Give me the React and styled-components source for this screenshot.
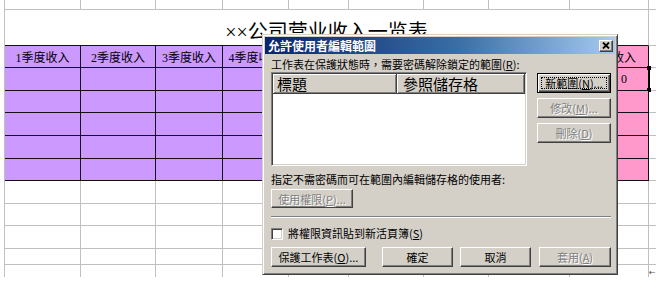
import React from 'react';
import styled, { createGlobalStyle, css } from 'styled-components';

const Global = createGlobalStyle`
  html, body { margin: 0; padding: 0; background: #fff; }
  body { width: 656px; height: 286px; overflow: hidden; }
  #root { width: 656px; height: 286px; }
`;

const COLS = '5px 76px 75px 67px 66px 60px 75px 65px 81px 79px 1fr';
const GRID = '#c0c0c0';
const INK = '#141018';
const PURPLE = '#cc99ff';
const PINK = '#ff99cc';
const FACE = '#d4d0c8';

const Page = styled.div`
  position: relative;
  width: 656px;
  height: 286px;
  background: #fff;
  overflow: hidden;
`;

const Sheet = styled.div`
  display: flex;
  flex-direction: column;
`;

const Row = styled.div`
  display: grid;
  grid-template-columns: ${COLS};
  height: ${(p) => p.$h}px;
`;

const Gutter = styled.div`
  box-sizing: border-box;
  border-right: 1px solid ${GRID};
`;

const Rest = styled.div`
  box-sizing: border-box;
  border-bottom: ${(p) => (p.$noBottom ? 'none' : `1px solid ${GRID}`)};
  display: flex;
  align-items: flex-end;
  font-family: "DejaVu Sans", sans-serif;
  font-size: 8px;
  line-height: 8px;
  color: #505050;
  overflow: hidden;
`;

const Cell = styled.div`
  box-sizing: border-box;
  position: relative;
  grid-column: span ${(p) => p.$span || 1};
  display: flex;
  align-items: center;
  justify-content: ${(p) => p.$justify || 'center'};
  padding-left: ${(p) => p.$indent || 0}px;
  padding-top: ${(p) => p.$padTop || 0}px;
  background: ${(p) => p.$bg || 'transparent'};
  border-right: 1px solid ${(p) => p.$line || GRID};
  border-bottom: ${(p) => (p.$noBottom ? 'none' : `1px solid ${p.$bottom || p.$line || GRID}`)};
  font-family: "Liberation Serif", "Noto Sans CJK SC", serif;
  font-size: ${(p) => p.$size || 12}px;
  color: #000;
  white-space: nowrap;
  overflow: visible;
`;

const Selection = styled.div`
  position: absolute;
  right: -2px;
  top: -2px;
  bottom: -2px;
  width: 2px;
  background: #000;
  &::before, &::after {
    content: '';
    position: absolute;
    left: -1px;
    width: 4px;
    height: 4px;
    background: #000;
  }
  &::before { top: 0; }
  &::after { bottom: 0; }
`;

/* ---------- dialog ---------- */

const Dialog = styled.div`
  position: absolute;
  left: 262px;
  top: 34px;
  width: 356px;
  height: 241px;
  box-sizing: border-box;
  background: ${FACE};
  border: 1px solid;
  border-color: ${FACE} #404040 #404040 ${FACE};
  box-shadow: inset 1px 1px 0 #fff, inset -1px -1px 0 #808080;
  padding: 2px;
  display: flex;
  flex-direction: column;
  font-family: "Noto Sans CJK TC", "Noto Sans CJK SC", sans-serif;
  font-size: 11px;
  color: #000;
`;

const TitleBar = styled.div`
  height: 17px;
  flex: none;
  display: flex;
  align-items: center;
  justify-content: space-between;
  padding: 0 2px 0 3px;
  background: linear-gradient(to right, #0a246a, #3a6ea5 55%, #a6caf0);
  color: #fff;
  font-weight: bold;
  font-size: 12px;
  line-height: 17px;
`;

const CloseBtn = styled.div`
  box-sizing: border-box;
  width: 14px;
  height: 12px;
  background: ${FACE};
  border: 1px solid;
  border-color: #fff #404040 #404040 #fff;
  box-shadow: inset -1px -1px 0 #808080;
  display: flex;
  align-items: center;
  justify-content: center;
`;

const Body = styled.div`
  display: flex;
  flex-direction: column;
  padding: 0 4px 0 6px;
`;

const Label = styled.div`
  margin-top: ${(p) => p.$mt}px;
  height: 12px;
  line-height: 12px;
  white-space: nowrap;
`;

const U = styled.span`
  text-decoration: underline;
`;

const MainRow = styled.div`
  margin-top: 2px;
  display: flex;
  gap: 10px;
`;

const ListBox = styled.div`
  box-sizing: border-box;
  flex: 1;
  height: 94px;
  background: #fff;
  border: 1px solid;
  border-color: #808080 #fff #fff #808080;
  box-shadow: inset 1px 1px 0 #404040, inset -1px -1px 0 ${FACE};
  padding: 1px;
`;

const ListHead = styled.div`
  display: flex;
  height: 20px;
`;

const HeadCell = styled.div`
  box-sizing: border-box;
  width: ${(p) => (p.$w ? `${p.$w}px` : 'auto')};
  flex: ${(p) => (p.$w ? 'none' : 1)};
  height: 20px;
  background: ${FACE};
  border-right: 1px solid #404040;
  border-bottom: 1px solid #404040;
  box-shadow: inset 1px 1px 0 #fff, inset -1px -1px 0 #808080;
  padding-left: ${(p) => p.$pl}px;
  font-size: 15px;
  line-height: 20px;
  color: #000;
  white-space: nowrap;
  overflow: hidden;
`;

const SideButtons = styled.div`
  margin-top: 1px;
  display: flex;
  flex-direction: column;
  gap: 5px;
  width: 74px;
`;

const Btn = styled.div`
  box-sizing: border-box;
  flex: none;
  width: ${(p) => p.$w}px;
  height: ${(p) => p.$h || 20}px;
  margin-left: ${(p) => p.$ml || 0}px;
  margin-top: ${(p) => p.$mt || 0}px;
  background: ${FACE};
  border: 1px solid;
  border-color: #fff #404040 #404040 #fff;
  box-shadow: inset -1px -1px 0 #808080;
  display: flex;
  align-items: center;
  justify-content: center;
  font-size: 11px;
  line-height: 12px;
  white-space: nowrap;
  color: ${(p) => (p.$disabled ? '#808080' : '#000')};
  text-shadow: ${(p) => (p.$disabled ? '1px 1px 0 #fff' : 'none')};
  ${(p) =>
    p.$default &&
    css`
      border-color: #000;
      box-shadow: inset 1px 1px 0 #fff, inset -1px -1px 0 #404040, inset -2px -2px 0 #808080;
      outline: 1px dotted #000;
      outline-offset: -5px;
    `}
`;

const Separator = styled.div`
  margin-top: 8px;
  height: 0;
  border-top: 1px solid #808080;
  border-bottom: 1px solid #fff;
`;

const CheckRow = styled.div`
  margin-top: 9px;
  display: flex;
  align-items: center;
  gap: 5px;
  height: 13px;
  line-height: 13px;
  white-space: nowrap;
`;

const CheckBox = styled.div`
  box-sizing: border-box;
  width: 12px;
  height: 12px;
  background: #fff;
  border: 1px solid;
  border-color: #808080 #fff #fff #808080;
  box-shadow: inset 1px 1px 0 #404040, inset -1px -1px 0 ${FACE};
`;

const BottomRow = styled.div`
  margin-top: 7px;
  display: flex;
`;

const headers = ['1季度收入', '2季度收入', '3季度收入', '4季度收入', '', '', '', ''];
const dataHeights = [23, 22, 23, 23, 22];
const whiteHeights = [23, 22, 23, 16, 12];

export default function App() {
  return (
    <Page>
      <Global />
      <Sheet>
        <Row $h={10}>
          <Gutter />
          {Array.from({ length: 9 }).map((_, i) => (
            <Cell key={i} />
          ))}
          <Rest />
        </Row>
        <Row $h={36}>
          <Gutter />
          <Cell $span={9} $bottom={INK} $padTop={5} $size={20}>
            ××公司营业收入一览表
          </Cell>
          <Rest />
        </Row>
        <Row $h={22}>
          <Gutter />
          {headers.map((t, i) => (
            <Cell key={i} $bg={PURPLE} $line={INK}>
              {t}
            </Cell>
          ))}
          <Cell $bg={PINK} $line={INK} $indent={6}>
            全年收入
          </Cell>
          <Rest />
        </Row>
        {dataHeights.map((h, r) => (
          <Row key={r} $h={h}>
            <Gutter />
            {headers.map((_, i) => (
              <Cell key={i} $bg={PURPLE} $line={INK} />
            ))}
            {r === 0 ? (
              <Cell $bg={PINK} $line={INK} $justify="flex-start" $indent={51}>
                0
                <Selection />
              </Cell>
            ) : (
              <Cell $bg={PINK} $line={INK} />
            )}
            <Rest />
          </Row>
        ))}
        {whiteHeights.map((h, r) => {
          const last = r === whiteHeights.length - 1;
          return (
            <Row key={r} $h={h}>
              <Gutter />
              {Array.from({ length: 9 }).map((_, i) => (
                <Cell key={i} $noBottom={last} />
              ))}
              <Rest $noBottom={last}>{last ? '←' : ''}</Rest>
            </Row>
          );
        })}
      </Sheet>

      <Dialog>
        <TitleBar>
          <span>允許使用者編輯範圍</span>
          <CloseBtn>
            <svg width="8" height="7" viewBox="0 0 8 7">
              <path d="M1 0.5 L7 6.5 M7 0.5 L1 6.5" stroke="#000" strokeWidth="1.8" />
            </svg>
          </CloseBtn>
        </TitleBar>
        <Body>
          <Label $mt={4}>
            工作表在保護狀態時，需要密碼解除鎖定的範圍(<U>R</U>):
          </Label>
          <MainRow>
            <ListBox>
              <ListHead>
                <HeadCell $w={124} $pl={4}>標題</HeadCell>
                <HeadCell $pl={6}>參照儲存格</HeadCell>
              </ListHead>
            </ListBox>
            <SideButtons>
              <Btn $w={74} $default>
                新範圍(<U>N</U>)...
              </Btn>
              <Btn $w={74} $disabled>
                修改(<U>M</U>)...
              </Btn>
              <Btn $w={74} $disabled>
                刪除(<U>D</U>)
              </Btn>
            </SideButtons>
          </MainRow>
          <Label $mt={7}>指定不需密碼而可在範圍內編輯儲存格的使用者:</Label>
          <Btn $w={82} $h={19} $mt={4} $disabled>
            使用權限(<U>P</U>)...
          </Btn>
          <Separator />
          <CheckRow>
            <CheckBox />
            <span>
              將權限資訊貼到新活頁簿(<U>S</U>)
            </span>
          </CheckRow>
          <BottomRow>
            <Btn $w={95}>
              保護工作表(<U>O</U>)...
            </Btn>
            <Btn $w={71} $ml={16}>
              確定
            </Btn>
            <Btn $w={71} $ml={7}>
              取消
            </Btn>
            <Btn $w={72} $ml={8} $disabled>
              套用(<U>A</U>)
            </Btn>
          </BottomRow>
        </Body>
      </Dialog>
    </Page>
  );
}
